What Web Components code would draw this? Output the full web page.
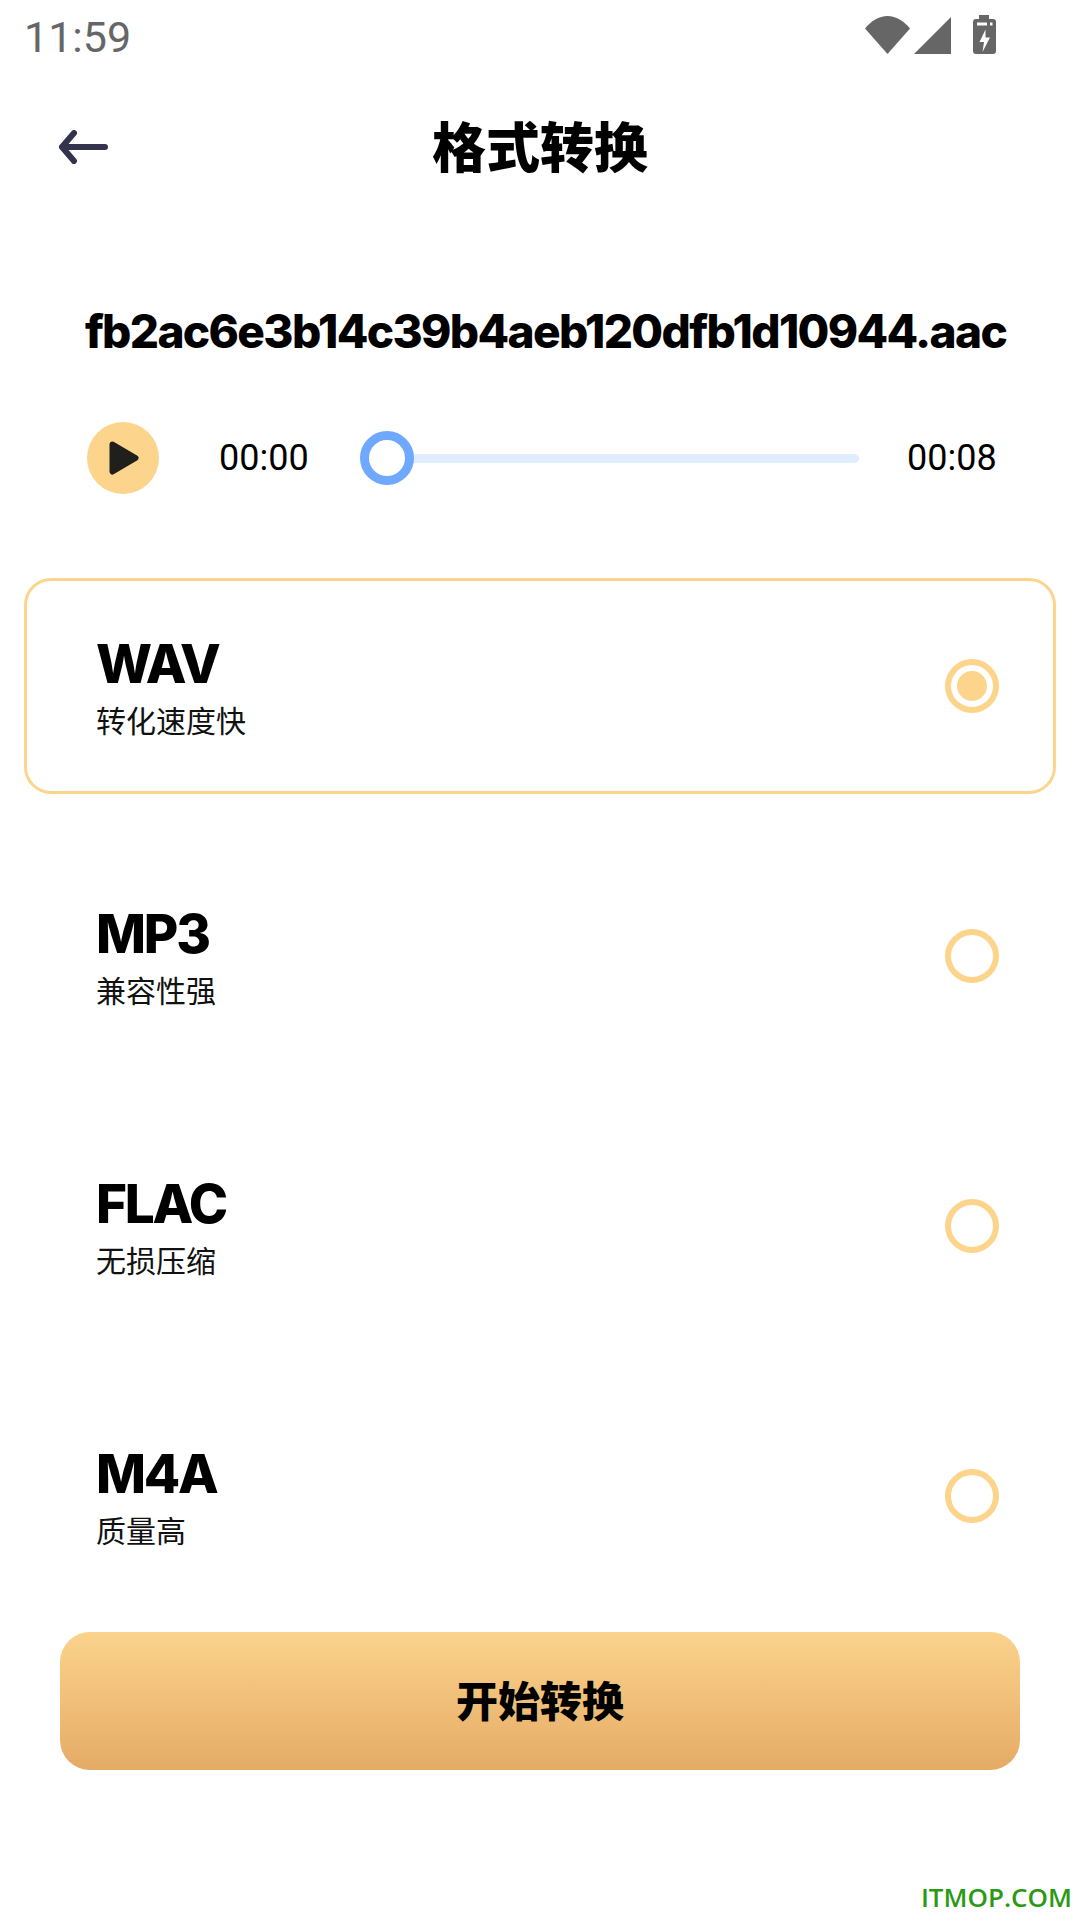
<!DOCTYPE html>
<html><head><meta charset="utf-8"><style>
html,body{margin:0;padding:0;background:#fff}
body{width:1080px;height:1920px;overflow:hidden;font-family:"Noto Sans CJK SC",sans-serif}
</style></head><body>
<app-page></app-page>
<script>
function def(name, html){
  customElements.define(name, class extends HTMLElement{
    constructor(){super();this.attachShadow({mode:'open'}).innerHTML=typeof html==='function'?html(this):html;}
  });
}
def('status-bar',`<style>
:host{display:flex;align-items:center;justify-content:space-between;height:74px;padding:0 84px 0 24px;box-sizing:border-box;color:#666;font:400 43px/74px Roboto,sans-serif}
svg{display:block;align-self:flex-start;margin-top:15px}
</style><span>11:59</span>
<svg width="131" height="40" viewBox="865 15 131 40" fill="#666">
<path d="M865 28.500C871 21 879 16 887.500 16S904 21 910 28.500L887.500 54Z"/>
<path d="M914 54L951 17V54Z"/>
<path fill-rule="evenodd" d="M979 15H989V19H993A3 3 0 0 1 996 22V51A3 3 0 0 1 993 54H976A3 3 0 0 1 973 51V22A3 3 0 0 1 976 19H979ZM977 22.500V25.500H987V22.500ZM990 22.500V25.500H992.500V22.500ZM985.500 29.500L979.500 42H984L982.500 52L990 37.500H985.500Z"/>
</svg>`);
def('nav-bar',`<style>
:host{display:flex;align-items:center;justify-content:center;height:148px;position:relative}
h1{margin:0;padding-bottom:7px;font:900 54px/1 "Noto Sans CJK SC",sans-serif;color:#000}
svg{position:absolute;left:58px;top:56px}
</style>
<svg width="50" height="34" viewBox="0 0 50 34" fill="none" stroke="#33334d" stroke-width="6" stroke-linecap="round" stroke-linejoin="round"><path d="M4 17H47M16 3L4 17L16 31"/></svg>
<h1><slot></slot></h1>`);
def('file-name',`<style>
:host{display:block;text-align:center;margin-top:79px;padding-left:11px;font:800 46px/60px Inter,sans-serif;letter-spacing:-1.650px;color:#000;white-space:nowrap}
</style><slot></slot>`);
def('audio-player',`<style>
:host{display:flex;align-items:center;height:72px;margin-top:61px;padding-left:87px;font:400 36px/72px Roboto,sans-serif;color:#000}
.play{width:72px;height:72px;border-radius:50%;background:#fdd48c;display:flex;align-items:center;justify-content:center;flex:none}
.play svg{display:block;margin-left:1px}
.t{width:88px;white-space:nowrap}
.start{margin-left:60px}
.slider{width:499px;height:54px;margin-left:53px;margin-right:48px;position:relative;display:flex;align-items:center;flex:none}
.track{width:100%;height:9px;border-radius:5px;background:#e0edff}
.thumb{position:absolute;left:0;top:0;width:54px;height:54px;box-sizing:border-box;border:9px solid #6fa8ff;border-radius:50%;background:#fff}
</style>
<div class="play"><svg width="30" height="34" viewBox="0 0 30 34"><path d="M3.500 3.500L26.500 17L3.500 30.500Z" fill="#1f1f1c" stroke="#1f1f1c" stroke-width="6" stroke-linejoin="round"/></svg></div>
<span class="t start">00:00</span>
<div class="slider"><div class="track"></div><div class="thumb"></div></div>
<span class="t">00:08</span>`);
def('format-option',(el)=>`<style>
:host{display:flex;align-items:center;justify-content:space-between;box-sizing:border-box;height:216px;margin:0 24px 54px;padding:0 54px 0 69px;border:3px solid transparent;border-radius:27px;color:#000}
:host([selected]){border-color:#fdd48c}
.name{font:800 53px/60px Inter,sans-serif;letter-spacing:-2.200px}
.sub{font:400 30px/40px "Noto Sans CJK SC",sans-serif;margin-top:5px;color:#111}
.radio{width:54px;height:54px;box-sizing:border-box;border:6px solid #fdd48c;border-radius:50%;display:flex;align-items:center;justify-content:center}
:host([selected]) .dot{width:30px;height:30px;border-radius:50%;background:#fdd48c}
</style>
<div><div class="name"><slot name="name"></slot></div><div class="sub"><slot name="sub"></slot></div></div>
<div class="radio"><div class="dot"></div></div>`);
def('primary-button',`<style>
:host{display:flex;align-items:center;justify-content:center;box-sizing:border-box;height:138px;margin:-26px 60px 0;padding-bottom:4px;border-radius:30px;background:linear-gradient(180deg,#fbd38c,#e5ab66);font:900 42px/1 "Noto Sans CJK SC",sans-serif;color:#000}
</style><slot></slot>`);
def('app-page',`<style>
:host{display:block;height:1920px;position:relative}
.wm{position:absolute;right:8px;bottom:10px;font:600 26px/1 "Open Sans",sans-serif;color:#2a9a14}
</style>
<status-bar></status-bar>
<nav-bar>格式转换</nav-bar>
<file-name>fb2ac6e3b14c39b4aeb120dfb1d10944.aac</file-name>
<audio-player></audio-player>
<div style="height:84px"></div>
<format-option selected><span slot="name">WAV</span><span slot="sub">转化速度快</span></format-option>
<format-option><span slot="name">MP3</span><span slot="sub">兼容性强</span></format-option>
<format-option><span slot="name">FLAC</span><span slot="sub">无损压缩</span></format-option>
<format-option><span slot="name">M4A</span><span slot="sub">质量高</span></format-option>
<primary-button>开始转换</primary-button>
<div class="wm">ITMOP.COM</div>`);
</script>
</body></html>
